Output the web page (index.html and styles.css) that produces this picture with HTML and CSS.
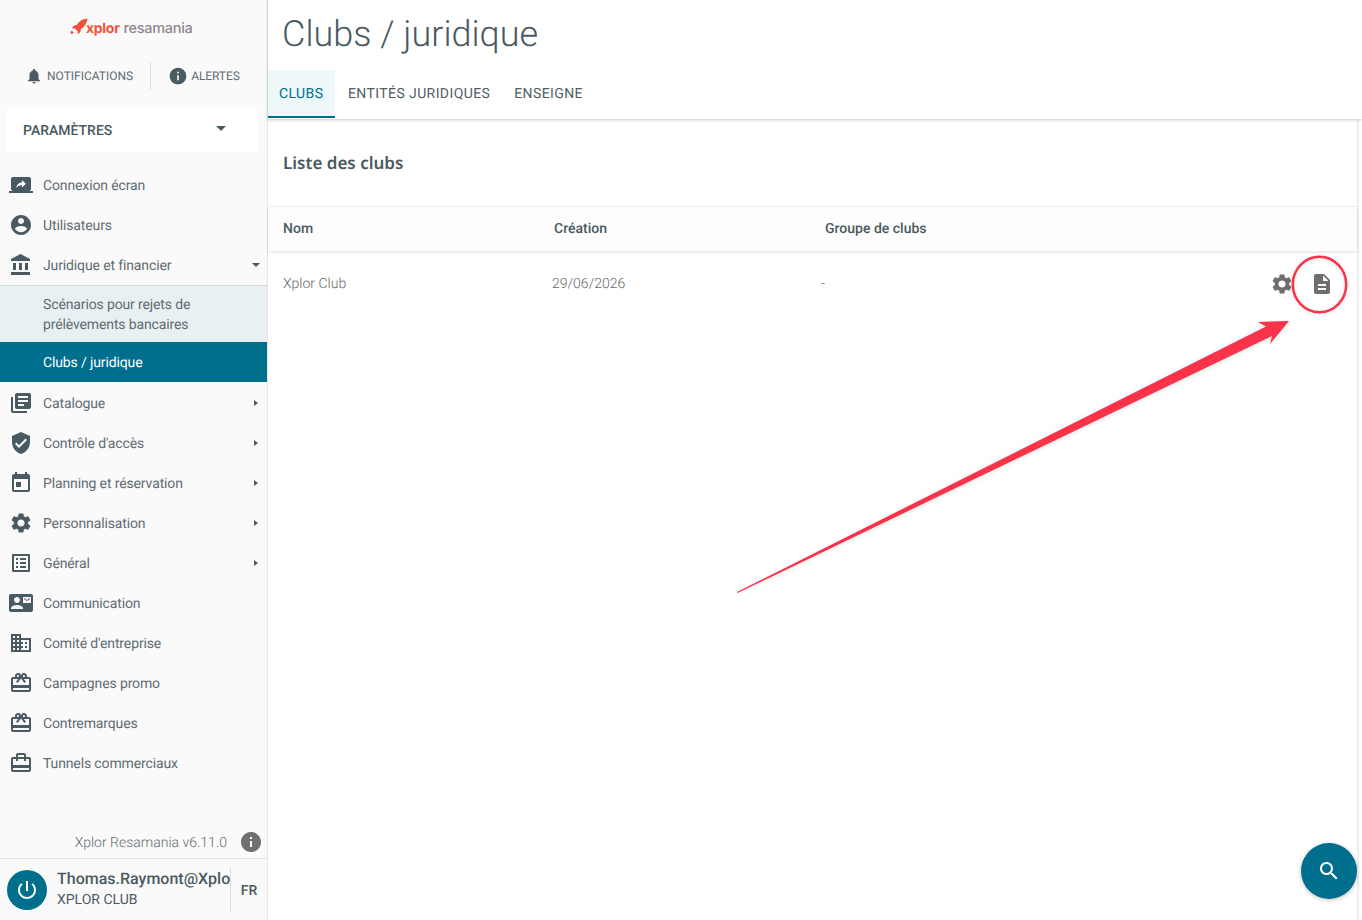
FILE: index.html
```html
<!DOCTYPE html>
<html lang="fr">
<head>
<meta charset="UTF-8">
<title>Clubs / juridique</title>
<link rel="stylesheet" href="styles.css">
</head>
<body>
<svg class="sprite">
    <symbol id="i-bell" viewBox="0 0 24 24"><path d="M12 22c1.1 0 2-.9 2-2h-4c0 1.1.9 2 2 2zm6-6v-5c0-3.07-1.63-5.64-4.5-6.32V4c0-.83-.67-1.5-1.5-1.5s-1.5.67-1.5 1.5v.68C7.64 5.36 6 7.92 6 11v5l-2 2v1h16v-1l-2-2z"/></symbol>
    <symbol id="i-info" viewBox="0 0 24 24"><path d="M12 2C6.48 2 2 6.48 2 12s4.48 10 10 10 10-4.48 10-10S17.52 2 12 2zm1 15h-2v-6h2v6zm0-8h-2V7h2v2z"/></symbol>
    <symbol id="i-screen" viewBox="0 0 24 24"><path d="M20 18c1.1 0 1.99-.9 1.99-2L22 6c0-1.11-.9-2-2-2H4c-1.11 0-2 .89-2 2v10c0 1.1.89 2 2 2H0v2h24v-2h-4zm-7-3.53v-2.19c-2.78 0-4.61.85-6 2.72.56-2.67 2.11-5.33 6-5.87V7l4 3.73-4 3.74z"/></symbol>
    <symbol id="i-user" viewBox="0 0 24 24"><path d="M12 2C6.48 2 2 6.48 2 12s4.48 10 10 10 10-4.48 10-10S17.52 2 12 2zm0 3c1.66 0 3 1.34 3 3s-1.34 3-3 3-3-1.34-3-3 1.34-3 3-3zm0 14.2c-2.5 0-4.71-1.28-6-3.22.03-1.99 4-3.08 6-3.08 1.99 0 5.97 1.09 6 3.08-1.29 1.94-3.5 3.22-6 3.22z"/></symbol>
    <symbol id="i-bank" viewBox="0 0 24 24"><path d="M4 10v7h3v-7H4zm6 0v7h3v-7h-3zM2 22h19v-3H2v3zm14-12v7h3v-7h-3zm-4.5-9L2 6v2h19V6l-9.5-5z"/></symbol>
    <symbol id="i-books" viewBox="0 0 24 24"><path d="M4 6H2v14c0 1.1.9 2 2 2h14v-2H4V6zm16-4H8c-1.1 0-2 .9-2 2v12c0 1.1.9 2 2 2h12c1.1 0 2-.9 2-2V4c0-1.1-.9-2-2-2zm-1 9H9V9h10v2zm-4 4H9v-2h6v2zm4-8H9V5h10v2z"/></symbol>
    <symbol id="i-shield" viewBox="0 0 24 24"><path d="M12 1L3 5v6c0 5.55 3.84 10.74 9 12 5.16-1.26 9-6.45 9-12V5l-9-4zm-2 16l-4-4 1.41-1.41L10 14.17l6.59-6.59L18 9l-8 8z"/></symbol>
    <symbol id="i-event" viewBox="0 0 24 24"><path d="M12 11H7v5h5v-5zM16 1v2H8V1H6v2H5c-1.11 0-1.99.9-1.99 2L3 19c0 1.1.89 2 2 2h14c1.1 0 2-.9 2-2V5c0-1.1-.9-2-2-2h-1V1h-2zm3 18H5V8h14v11z"/></symbol>
    <symbol id="i-gear" viewBox="0 0 24 24"><path d="M19.14 12.94c.04-.3.06-.61.06-.94 0-.32-.02-.64-.07-.94l2.03-1.58c.18-.14.23-.41.12-.61l-1.92-3.32c-.12-.22-.37-.29-.59-.22l-2.39.96c-.5-.38-1.03-.7-1.62-.94l-.36-2.54c-.04-.24-.24-.41-.48-.41h-3.84c-.24 0-.43.17-.47.41l-.36 2.54c-.59.24-1.13.57-1.62.94l-2.39-.96c-.22-.08-.47 0-.59.22L2.74 8.87c-.12.21-.08.47.12.61l2.03 1.58c-.05.3-.09.63-.09.94s.02.64.07.94l-2.03 1.58c-.18.14-.23.41-.12.61l1.92 3.32c.12.22.37.29.59.22l2.39-.96c.5.38 1.03.7 1.62.94l.36 2.54c.05.24.24.41.48.41h3.84c.24 0 .44-.17.47-.41l.36-2.54c.59-.24 1.13-.56 1.62-.94l2.39.96c.22.08.47 0 .59-.22l1.92-3.32c.12-.22.07-.47-.12-.61l-2.01-1.58zM12 15.6c-1.98 0-3.6-1.62-3.6-3.6s1.62-3.6 3.6-3.6 3.6 1.62 3.6 3.6-1.62 3.6-3.6 3.6z"/></symbol>
    <symbol id="i-list" viewBox="0 0 24 24"><path d="M19 5v14H5V5h14m1.1-2H3.9c-.5 0-.9.4-.9.9v16.2c0 .4.4.9.9.9h16.2c.4 0 .9-.5.9-.9V3.9c0-.5-.5-.9-.9-.9zM11 7h6v2h-6V7zm0 4h6v2h-6v-2zm0 4h6v2h-6zM7 7h2v2H7zm0 4h2v2H7zm0 4h2v2H7z"/></symbol>
    <symbol id="i-contact" viewBox="0 0 24 24"><path d="M21 8V7l-3 2-3-2v1l3 2 3-2zm1-5H2C.9 3 0 3.9 0 5v14c0 1.1.9 2 2 2h20c1.1 0 1.99-.9 1.99-2L24 5c0-1.1-.9-2-2-2zM8 6c1.66 0 3 1.34 3 3s-1.34 3-3 3-3-1.34-3-3 1.34-3 3-3zm6 12H2v-1c0-2 4-3.1 6-3.1s6 1.1 6 3.1v1zm8-6h-8V6h8v6z"/></symbol>
    <symbol id="i-domain" viewBox="0 0 24 24"><path d="M12 7V3H2v18h20V7H12zM6 19H4v-2h2v2zm0-4H4v-2h2v2zm0-4H4V9h2v2zm0-4H4V5h2v2zm4 12H8v-2h2v2zm0-4H8v-2h2v2zm0-4H8V9h2v2zm0-4H8V5h2v2zm10 12h-8v-2h2v-2h-2v-2h2v-2h-2V9h8v10zm-2-8h-2v2h2v-2zm0 4h-2v2h2v-2z"/></symbol>
    <symbol id="i-gift" viewBox="0 0 24 24"><path d="M20 6h-2.18c.11-.31.18-.65.18-1 0-1.66-1.34-3-3-3-1.05 0-1.96.54-2.5 1.35l-.5.67-.5-.68C10.96 2.54 10.05 2 9 2 7.34 2 6 3.34 6 5c0 .35.07.69.18 1H4c-1.11 0-1.99.89-1.99 2L2 19c0 1.11.89 2 2 2h16c1.11 0 2-.89 2-2V8c0-1.11-.89-2-2-2zm-5-2c.55 0 1 .45 1 1s-.45 1-1 1-1-.45-1-1 .45-1 1-1zM9 4c.55 0 1 .45 1 1s-.45 1-1 1-1-.45-1-1 .45-1 1-1zm11 15H4v-2h16v2zm0-5H4V8h5.08L7 10.83 8.62 12 11 8.76l1-1.36 1 1.36L15.38 12 17 10.83 14.92 8H20v6z"/></symbol>
    <symbol id="i-travel" viewBox="0 0 24 24"><path d="M20 6h-3V4c0-1.11-.89-2-2-2H9c-1.11 0-2 .89-2 2v2H4c-1.11 0-2 .89-2 2v11c0 1.11.89 2 2 2h16c1.11 0 2-.89 2-2V8c0-1.11-.89-2-2-2zM9 4h6v2H9V4zm11 15H4v-2h16v2zm0-5H4V8h3v2h2V8h6v2h2V8h3v6z"/></symbol>
    <symbol id="i-doc" viewBox="0 0 24 24"><path d="M14 2H6c-1.1 0-1.99.9-1.99 2L4 20c0 1.1.89 2 1.99 2H18c1.1 0 2-.9 2-2V8l-6-6zm2 16H8v-2h8v2zm0-4H8v-2h8v2zm-3-5V3.5L18.5 9H13z"/></symbol>
    <symbol id="i-search" viewBox="0 0 24 24"><path d="M15.5 14h-.79l-.28-.27C15.41 12.59 16 11.11 16 9.5 16 5.91 13.09 3 9.5 3S3 5.91 3 9.5 5.91 16 9.5 16c1.61 0 3.09-.59 4.23-1.57l.27.28v.79l5 4.99L20.49 19l-4.99-5zm-6 0C7.01 14 5 11.99 5 9.5S7.01 5 9.5 5 14 7.01 14 9.5 11.99 14 9.5 14z"/></symbol>
    <symbol id="i-power" viewBox="0 0 24 24"><path d="M13 3h-2v10h2V3zm4.83 2.17l-1.42 1.42C17.99 7.86 19 9.81 19 12c0 3.87-3.13 7-7 7s-7-3.13-7-7c0-2.19 1.01-4.14 2.58-5.42L6.17 5.17C4.23 6.82 3 9.26 3 12c0 4.97 4.03 9 9 9s9-4.03 9-9c0-2.74-1.23-5.18-3.17-6.83z"/></symbol>
</svg>

<div class="app">
    <aside class="sidebar">
        <div class="brand">
            <svg class="brand-rocket" viewBox="0 0 16 16"><path d="M15.5.5C11.5.8 8.2 2.6 6 6.2L3.6 6.6 1.5 9l3 .3 2.2 2.2.3 3 2.3-2.1.4-2.5c3.6-2.2 5.5-5.5 5.8-9.4zM1.6 11.2c-.9.4-1.2 1.4-1.1 2.8 1.4.1 2.4-.2 2.8-1.1z"/></svg>
            <span class="brand-x">xplor</span>
            <span class="brand-r">resamania</span>
        </div>
        <div class="top-links">
            <div class="top-link top-link-notif">
                <svg class="icon-18"><use href="#i-bell"/></svg>
                <span>NOTIFICATIONS</span>
            </div>
            <div class="top-link top-link-alert">
                <svg class="icon-20"><use href="#i-info"/></svg>
                <span>ALERTES</span>
            </div>
        </div>
        <div class="select-box">
            <span>PARAMÈTRES</span>
            <i class="caret-down"></i>
        </div>

        <nav class="menu">
            <a class="menu-item"><svg class="menu-icon wide"><use href="#i-screen"/></svg><span>Connexion écran</span></a>
            <a class="menu-item"><svg class="menu-icon"><use href="#i-user"/></svg><span>Utilisateurs</span></a>
            <a class="menu-item"><svg class="menu-icon"><use href="#i-bank"/></svg><span>Juridique et financier</span><i class="caret-small-down"></i></a>
            <div class="submenu">
                <a class="sub-item">Scénarios pour rejets de prélèvements bancaires</a>
                <a class="sub-item active">Clubs / juridique</a>
            </div>
            <a class="menu-item"><svg class="menu-icon"><use href="#i-books"/></svg><span>Catalogue</span><i class="caret-right"></i></a>
            <a class="menu-item"><svg class="menu-icon"><use href="#i-shield"/></svg><span>Contrôle d'accès</span><i class="caret-right"></i></a>
            <a class="menu-item"><svg class="menu-icon"><use href="#i-event"/></svg><span>Planning et réservation</span><i class="caret-right"></i></a>
            <a class="menu-item"><svg class="menu-icon"><use href="#i-gear"/></svg><span>Personnalisation</span><i class="caret-right"></i></a>
            <a class="menu-item"><svg class="menu-icon"><use href="#i-list"/></svg><span>Général</span><i class="caret-right"></i></a>
            <a class="menu-item"><svg class="menu-icon wide"><use href="#i-contact"/></svg><span>Communication</span></a>
            <a class="menu-item"><svg class="menu-icon"><use href="#i-domain"/></svg><span>Comité d'entreprise</span></a>
            <a class="menu-item"><svg class="menu-icon"><use href="#i-gift"/></svg><span>Campagnes promo</span></a>
            <a class="menu-item"><svg class="menu-icon"><use href="#i-gift"/></svg><span>Contremarques</span></a>
            <a class="menu-item"><svg class="menu-icon"><use href="#i-travel"/></svg><span>Tunnels commerciaux</span></a>
        </nav>

        <div class="version">
            <span>Xplor Resamania v6.11.0</span>
            <svg class="icon-version"><use href="#i-info"/></svg>
        </div>
        <div class="user-bar">
            <div class="power"><svg class="icon-power"><use href="#i-power"/></svg></div>
            <div class="user-text">
                <div class="user-name">Thomas.Raymont@Xplor</div>
                <div class="user-club">XPLOR CLUB</div>
            </div>
            <div class="lang">FR</div>
        </div>
    </aside>

    <main class="main">
        <header class="page-head">
            <h1>Clubs / juridique</h1>
            <div class="tabs">
                <a class="tab active">CLUBS</a>
                <a class="tab">ENTITÉS JURIDIQUES</a>
                <a class="tab">ENSEIGNE</a>
            </div>
        </header>
        <section class="panel">
            <h2>Liste des clubs</h2>
            <div class="table-head">
                <span>Nom</span>
                <span>Création</span>
                <span>Groupe de clubs</span>
            </div>
            <div class="table-row">
                <span>Xplor Club</span>
                <span>29/06/2026</span>
                <span>-</span>
                <div class="row-actions">
                    <svg class="row-icon"><use href="#i-gear"/></svg>
                    <svg class="row-icon"><use href="#i-doc"/></svg>
                </div>
            </div>
        </section>
    </main>
</div>

<div class="fab"><svg class="icon-fab"><use href="#i-search"/></svg></div>

<!-- annotation over the screenshot -->
<svg class="annotation" viewBox="0 0 1362 920">
    <ellipse cx="1319.5" cy="284.5" rx="26.7" ry="27.7" fill="none" stroke="#f9334a" stroke-width="2.5"/>
    <polygon points="737,592 737.6,593 1272,336 1270,344 1289,321 1258,322 1266,326.5" fill="#f9334a"/>
</svg>
</body>
</html>
```
FILE: styles.css
```css
*{
    box-sizing: border-box;
}
html, body{
    margin: 0;
    height: 100%;
    overflow: hidden;
}
body{
    font-family: Roboto, "Liberation Sans", sans-serif;
    color: #4a5a62;
    background-color: #fff;
    text-rendering: geometricPrecision;
}
.sprite{
    display: none;
}
svg{
    fill: currentColor;
    display: block;
}
.app{
    display: flex;
    height: 920px;
}

/* sidebar */
.sidebar{
    width: 268px;
    height: 100%;
    flex: none;
    display: flex;
    flex-direction: column;
    background-color: #fafafa;
    border-right: 1px solid #e6e6e6;
}
.brand{
    height: 50px;
    padding: 7px 0 0 70px;
    display: flex;
    align-items: center;
    flex: none;
}
.brand-rocket{
    width: 18px;
    height: 18px;
    color: #f4503a;
    margin-top: -4px;
}
.brand-x{
    font-family: Inter, sans-serif;
    font-weight: 700;
    font-size: 14px;
    letter-spacing: -0.3px;
    color: #f4503a;
    margin-left: -2px;
}
.brand-r{
    font-family: Inter, sans-serif;
    font-weight: 500;
    font-size: 14.5px;
    letter-spacing: -0.3px;
    color: #93858f;
    margin-left: 4px;
}
.top-links{
    display: flex;
    height: 28px;
    margin-top: 12px;
    padding-left: 25px;
    flex: none;
}
.top-link{
    display: flex;
    align-items: center;
    gap: 4px;
    font-size: 12px;
    color: #5f6c73;
}
.top-link-notif{
    padding-right: 17px;
    margin-right: 17px;
    border-right: 1px solid #d9dcdd;
}
.top-link-alert{
    gap: 3px;
    letter-spacing: -0.1px;
}
.top-link svg{
    color: #4a5a62;
}
.icon-18{
    width: 18px;
    height: 18px;
}
.icon-20{
    width: 20px;
    height: 20px;
}
.select-box{
    margin: 18px 10px 0 7px;
    height: 44px;
    padding: 0 31px 0 16px;
    background-color: #fff;
    display: flex;
    align-items: center;
    justify-content: space-between;
    font-size: 14px;
    font-weight: 500;
    flex: none;
}
.select-box span{
    padding-top: 2px;
}
.caret-down{
    width: 0;
    height: 0;
    margin-top: -3px;
    border-left: 5px solid transparent;
    border-right: 5px solid transparent;
    border-top: 5px solid #4a5a62;
}
.menu{
    margin-top: 13px;
    flex: 1;
}
.menu-item{
    height: 40px;
    display: flex;
    align-items: center;
    position: relative;
    padding-left: 9px;
    font-size: 14px;
    letter-spacing: -0.13px;
    color: #5f6c73;
}
.menu-item span{
    padding-top: 2px;
}
.menu-icon{
    width: 24px;
    height: 24px;
    margin-right: 10px;
    flex: none;
    color: #4a5a62;
}
.caret-right{
    margin-left: auto;
    margin-right: 9px;
    width: 0;
    height: 0;
    border-top: 3.5px solid transparent;
    border-bottom: 3.5px solid transparent;
    border-left: 4px solid #4a5a62;
}
.caret-small-down{
    margin-left: auto;
    margin-right: 7px;
    width: 0;
    height: 0;
    border-left: 4px solid transparent;
    border-right: 4px solid transparent;
    border-top: 4px solid #4a5a62;
}
.submenu{
    border-top: 1px solid #d3dadd;
    margin-bottom: 1px;
    background-color: #e9f0f2;
}
.sub-item{
    display: block;
    padding: 9px 40px 7px 43px;
    font-size: 14px;
    letter-spacing: -0.13px;
    line-height: 20px;
    color: #5f6c73;
}
.sub-item.active{
    height: 40px;
    padding-top: 11px;
    background-color: #006f8e;
    color: #fff;
}
.version{
    display: flex;
    align-items: center;
    justify-content: flex-end;
    padding: 0 4px 4px 0;
    gap: 12px;
    font-size: 14px;
    font-weight: 300;
    color: #5f6a70;
    flex: none;
}
.version span{
    padding-top: 2px;
}
.icon-version{
    width: 24px;
    height: 24px;
    color: #707070;
}
.user-bar{
    height: 62px;
    display: flex;
    align-items: center;
    padding-left: 7px;
    border-top: 1px solid #e2e4e5;
    flex: none;
}
.power{
    width: 40px;
    height: 40px;
    border-radius: 50%;
    background-color: #006f8e;
    color: #fff;
    display: flex;
    align-items: center;
    justify-content: center;
    flex: none;
}
.icon-power{
    width: 24px;
    height: 24px;
}
.user-text{
    width: 173px;
    margin-left: 10px;
    overflow: hidden;
    white-space: nowrap;
}
.user-name{
    font-size: 16px;
    font-weight: 500;
    line-height: 20px;
}
.user-club{
    font-size: 14px;
    line-height: 20px;
    margin-top: 1px;
}
.lang{
    width: 37px;
    height: 44px;
    padding-top: 2px;
    border-left: 1px solid #d9dcdd;
    display: flex;
    align-items: center;
    justify-content: center;
    font-size: 14px;
    font-weight: 500;
}

/* main */
.main{
    flex: 1;
    min-width: 0;
    display: flex;
    flex-direction: column;
}
.page-head{
    height: 119px;
    box-shadow: 0 1px 3px rgba(0,0,0,.22);
    position: relative;
    flex: none;
}
.page-head h1{
    margin: 0;
    height: 70px;
    padding: 13px 0 0 14px;
    font-size: 36px;
    line-height: 42px;
    font-weight: 300;
    color: #4a5a62;
}
.tabs{
    display: flex;
}
.tab{
    height: 48px;
    padding: 16px 12px 0 12px;
    font-size: 14px;
    line-height: 16px;
    letter-spacing: 0.4px;
    color: #4f5e66;
}
.tab.active{
    width: 67px;
    margin-right: 1px;
    padding-left: 11px;
    background-color: #eef8fa;
    color: #006f8e;
    border-bottom: 2px solid #006f8e;
}
.panel{
    flex: 1;
    width: 1091px;
    border-right: 2px solid #efefef;
}
.panel h2{
    margin: 0;
    height: 88px;
    padding: 31px 0 0 15px;
    font-family: "Noto Sans", sans-serif;
    font-size: 17px;
    line-height: 26px;
    font-weight: 600;
    border-bottom: 1px solid #f3f3f3;
}
.table-head{
    height: 44px;
    display: grid;
    grid-template-columns: 271px 271px 1fr;
    align-items: center;
    padding-left: 15px;
    font-size: 14px;
    font-weight: 500;
    background-color: #fdfdfd;
    box-shadow: 0 1px 3px rgba(0,0,0,.14);
}
.table-row{
    height: 66px;
    display: grid;
    grid-template-columns: 269px 269px 1fr auto;
    align-items: center;
    padding-left: 15px;
    font-size: 14px;
    font-weight: 300;
    color: #666;
}
.row-actions{
    display: flex;
    gap: 16px;
    padding: 0 23px 0 0;
    color: #6e6e6e;
}
.row-icon{
    width: 24px;
    height: 24px;
}
.fab{
    position: absolute;
    left: 1301px;
    top: 843px;
    width: 56px;
    height: 56px;
    border-radius: 50%;
    background-color: #006f8e;
    color: #fff;
    display: flex;
    align-items: center;
    justify-content: center;
    box-shadow: 0 1px 4px rgba(0,0,0,.25);
}
.icon-fab{
    width: 24px;
    height: 24px;
}
.annotation{
    position: absolute;
    left: 0;
    top: 0;
    width: 1362px;
    height: 920px;
    pointer-events: none;
    filter: drop-shadow(0 1px 2px rgba(0,0,0,.12));
}
```
